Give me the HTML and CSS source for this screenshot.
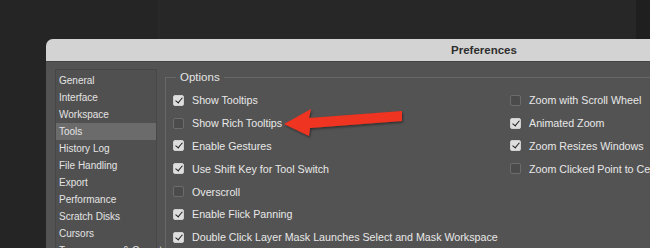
FILE: index.html
```html
<!DOCTYPE html>
<html lang="en">
<head>
    <meta charset="UTF-8">
    <meta name="viewport" content="width=device-width, initial-scale=1.0">
    <title>Preferences</title>
    <link rel="stylesheet" href="styles.css">
</head>
<body>
    <div class="window">
        <div class="titlebar">Preferences</div>
        <div class="content">
            <ul class="sidebar">
                <li>General</li>
                <li>Interface</li>
                <li>Workspace</li>
                <li class="active">Tools</li>
                <li>History Log</li>
                <li>File Handling</li>
                <li>Export</li>
                <li>Performance</li>
                <li>Scratch Disks</li>
                <li>Cursors</li>
                <li>Transparency &amp; Gamut</li>
            </ul>
            <div class="options">
                <div class="legend">Options</div>
                <div class="columns">
                    <div class="col col-left">
                        <div class="row"><span class="box checked"></span>Show Tooltips</div>
                        <div class="row"><span class="box"></span>Show Rich Tooltips</div>
                        <div class="row"><span class="box checked"></span>Enable Gestures</div>
                        <div class="row"><span class="box checked"></span>Use Shift Key for Tool Switch</div>
                        <div class="row"><span class="box"></span>Overscroll</div>
                        <div class="row"><span class="box checked"></span>Enable Flick Panning</div>
                        <div class="row"><span class="box checked"></span>Double Click Layer Mask Launches Select and Mask Workspace</div>
                    </div>
                    <div class="col">
                        <div class="row"><span class="box"></span>Zoom with Scroll Wheel</div>
                        <div class="row"><span class="box checked"></span>Animated Zoom</div>
                        <div class="row"><span class="box checked"></span>Zoom Resizes Windows</div>
                        <div class="row"><span class="box"></span>Zoom Clicked Point to Center</div>
                    </div>
                </div>
            </div>
        </div>
    </div>
    <svg class="arrow" width="130" height="40" viewBox="0 0 130 40">
        <defs>
            <filter id="shadow" x="-10%" y="-30%" width="120%" height="160%">
                <feDropShadow dx="1" dy="1.5" stdDeviation="1" flood-color="#000" flood-opacity="0.45"/>
            </filter>
        </defs>
        <polygon points="4,20 31,5 29,14 122,7 122,17 30,24 29,32" fill="#ef3420" filter="url(#shadow)"/>
    </svg>
</body>
</html>
```

FILE: styles.css
```css
body {
    margin: 0;
    width: 650px;
    height: 248px;
    overflow: hidden;
    background: linear-gradient(to right, #252525 0, #252525 158px, #2a2a2a 158px, #2a2a2a 159px, #272727 159px, #272727 636px, #1f1f1f 636px);
    font-family: 'Liberation Sans', Arial, sans-serif;
    position: relative;
}
.window {
    margin: 39px 0 0 46px;
    width: 876px;
    height: 230px;
    background: #535353;
    border-radius: 7px 7px 0 0;
    overflow: hidden;
}
.titlebar {
    height: 22px;
    line-height: 22px;
    background: #d3d3d3;
    border-bottom: 1px solid #444;
    color: #2e2e2e;
    font-size: 11.5px;
    font-weight: bold;
    text-align: center;
}
.content {
    display: flex;
    align-items: flex-start;
    padding: 7px 0 0 9px;
}
.sidebar {
    list-style: none;
    margin: 0;
    padding: 2px 0 0 0;
    width: 100px;
    height: 200px;
    background: #505050;
    border: 1px solid #474747;
}
.sidebar li {
    height: 17px;
    line-height: 17px;
    padding-left: 3px;
    font-size: 10px;
    color: #e4e4e4;
    white-space: nowrap;
}
.sidebar li.active {
    background: #6b6b6b;
}
.options {
    margin: 8px 0 0 8px;
    border: 1px solid #686868;
    border-right: none;
    height: 200px;
    position: relative;
    flex: 1;
}
.legend {
    position: absolute;
    top: -8px;
    left: 10px;
    padding: 0 4px;
    background: #535353;
    color: #e4e4e4;
    font-size: 11.5px;
    line-height: 14px;
}
.columns {
    display: flex;
    padding: 11px 0 0 7px;
}
.col-left {
    width: 337px;
}
.row {
    height: 22.8px;
    display: flex;
    align-items: center;
    color: #e8e8e8;
    font-size: 10.7px;
    white-space: nowrap;
}
.box {
    box-sizing: border-box;
    width: 11px;
    height: 11px;
    margin-right: 8px;
    border-radius: 2px;
    background: #4b4b4b;
    border: 1px solid #6c6c6c;
    flex-shrink: 0;
    position: relative;
}
.box.checked {
    background: #dedede;
    border-color: #cfcfcf;
}
.box.checked::after {
    content: '';
    position: absolute;
    left: 3px;
    top: 0px;
    width: 3px;
    height: 6px;
    border: solid #1e1e1e;
    border-width: 0 1.6px 1.6px 0;
    transform: rotate(40deg);
}
.arrow {
    position: absolute;
    left: 280px;
    top: 104px;
}
```
